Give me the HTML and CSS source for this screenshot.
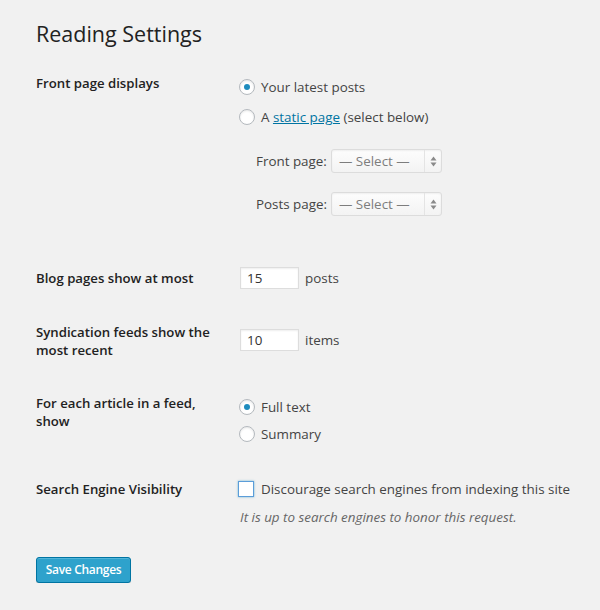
FILE: index.html
```html
<!DOCTYPE html>
<html>
<head>
<meta charset="utf-8">
<link rel="stylesheet" href="styles.css">
</head>
<body>
<div class="wrap">
  <h1 class="title">Reading Settings</h1>
  <form class="form">
    <div class="row row-front">
      <div class="th">Front page displays</div>
      <div class="td td-front">
        <label class="opt"><span class="radio checked"></span>Your latest posts</label>
        <label class="opt opt-gap"><span class="radio"></span>A&nbsp;<a class="link" href="#">static page</a>&nbsp;(select below)</label>
        <div class="pages">
          <div class="page-row">
            <span class="page-label">Front page:</span>
            <span class="select"><span class="select-text">— Select —</span><span class="select-btn"><svg width="7" height="11" viewBox="0 0 7 11"><path d="M3.5 0.5 L6.5 4.5 L0.5 4.5 Z M3.5 10.5 L6.5 6.5 L0.5 6.5 Z" fill="#8a8a8a"/></svg></span></span>
          </div>
          <div class="page-row page-row-2">
            <span class="page-label">Posts page:</span>
            <span class="select"><span class="select-text">— Select —</span><span class="select-btn"><svg width="7" height="11" viewBox="0 0 7 11"><path d="M3.5 0.5 L6.5 4.5 L0.5 4.5 Z M3.5 10.5 L6.5 6.5 L0.5 6.5 Z" fill="#8a8a8a"/></svg></span></span>
          </div>
        </div>
      </div>
    </div>

    <div class="row row-blog">
      <div class="th th-blog">Blog pages show at most</div>
      <div class="td"><span class="num">15</span><span class="unit">posts</span></div>
    </div>

    <div class="row row-feed">
      <div class="th">Syndication feeds show the most recent</div>
      <div class="td td-feed"><span class="num">10</span><span class="unit">items</span></div>
    </div>

    <div class="row row-article">
      <div class="th">For each article in a feed, show</div>
      <div class="td td-article">
        <label class="opt"><span class="radio checked"></span>Full text</label>
        <label class="opt opt-gap-sm"><span class="radio"></span>Summary</label>
      </div>
    </div>

    <div class="row row-search">
      <div class="th">Search Engine Visibility</div>
      <div class="td">
        <label class="opt"><span class="checkbox"></span>Discourage search engines from indexing this site</label>
        <p class="desc">It is up to search engines to honor this request.</p>
      </div>
    </div>

    <div class="submit">
      <button type="button" class="button">Save Changes</button>
    </div>
  </form>
</div>
</body>
</html>
```

FILE: styles.css
```css
html, body {
  margin: 0;
  padding: 0;
}
body {
  background: #f1f1f1;
  color: #444;
  font-family: "Open Sans", "Noto Sans", sans-serif;
  font-size: 13.4px;
  line-height: 18px;
}
.wrap {
  padding: 19px 0 0 36px;
}
.title {
  margin: 0;
  font-size: 21.5px;
  font-weight: 400;
  line-height: 29px;
  color: #222;
}
.form {
  margin: 0;
}
.row {
  display: grid;
  grid-template-columns: 204px 1fr;
}
.th {
  font-weight: 600;
  font-size: 13.2px;
  color: #222;
  width: 186px;
}
.row-front {
  margin-top: 22px;
}
.row-front .th {
  padding-top: 4px;
}
.td-front {
  padding-top: 8px;
}
.opt {
  display: flex;
  align-items: center;
  height: 18px;
  white-space: nowrap;
}
.opt-gap {
  margin-top: 12px;
}
.opt-gap-sm {
  margin-top: 9px;
}
.radio {
  box-sizing: border-box;
  width: 16px;
  height: 16px;
  border: 1px solid #b4b9be;
  border-radius: 50%;
  background: #fff;
  box-shadow: inset 0 1px 2px rgba(0,0,0,0.1);
  margin-right: 6px;
  margin-left: -1px;
  display: flex;
  align-items: center;
  justify-content: center;
  flex: none;
}
.radio.checked::after {
  content: "";
  width: 6px;
  height: 6px;
  border-radius: 50%;
  background: #1e8cbe;
}
.checkbox {
  box-sizing: border-box;
  width: 16px;
  height: 16px;
  border: 1px solid #5b9dd9;
  background: #fff;
  box-shadow: 0 0 2px rgba(30,140,190,0.6);
  margin-right: 7px;
  margin-left: -2px;
  flex: none;
}
.link {
  color: #0074a2;
  text-decoration: underline;
}
.pages {
  margin-top: 23px;
  padding-left: 16px;
}
.page-row {
  display: flex;
  align-items: center;
  height: 24px;
}
.page-row-2 {
  margin-top: 19px;
}
.page-label {
  width: 75px;
  flex: none;
}
.select {
  box-sizing: border-box;
  width: 111px;
  height: 24px;
  display: flex;
  align-items: stretch;
  border: 1px solid #dcdcdc;
  border-radius: 3px;
  background: linear-gradient(#fdfdfd, #f3f3f3);
  box-shadow: inset 0 1px 2px rgba(0,0,0,0.06);
  color: #7d7d7d;
}
.select-text {
  flex: 1;
  padding-left: 7px;
  display: flex;
  align-items: center;
}
.select-btn {
  width: 16px;
  border-left: 1px solid #e4e4e4;
  display: flex;
  align-items: center;
  justify-content: center;
}
.row-blog {
  margin-top: 51px;
}
.th-blog {
  padding-top: 2px;
}
.num {
  box-sizing: border-box;
  display: inline-block;
  vertical-align: top;
  width: 59px;
  height: 22px;
  line-height: 20px;
  padding-left: 6px;
  border: 1px solid #ddd;
  background: #fff;
  box-shadow: inset 0 1px 2px rgba(0,0,0,0.07);
  color: #333;
}
.unit {
  display: inline-block;
  margin-left: 6px;
  line-height: 22px;
  vertical-align: top;
}
.row-feed {
  margin-top: 34px;
}
.td-feed {
  padding-top: 6px;
}
.row-article {
  margin-top: 35px;
}
.td-article {
  padding-top: 4px;
}
.row-search {
  margin-top: 37px;
}
.desc {
  margin: 10px 0 0;
  font-style: italic;
  color: #666;
}
.submit {
  margin-top: 31px;
}
.button {
  box-sizing: border-box;
  width: 95px;
  height: 26px;
  padding: 0;
  border: 1px solid #0074a2;
  border-radius: 3px;
  background: #2ea2cc;
  box-shadow: inset 0 1px 0 rgba(120,200,230,0.5), 0 1px 0 rgba(0,0,0,0.15);
  color: #fff;
  font-family: "Open Sans", "Noto Sans", sans-serif;
  font-size: 12px;
  font-weight: 600;
  letter-spacing: -0.3px;
  line-height: 24px;
  cursor: pointer;
}
```
